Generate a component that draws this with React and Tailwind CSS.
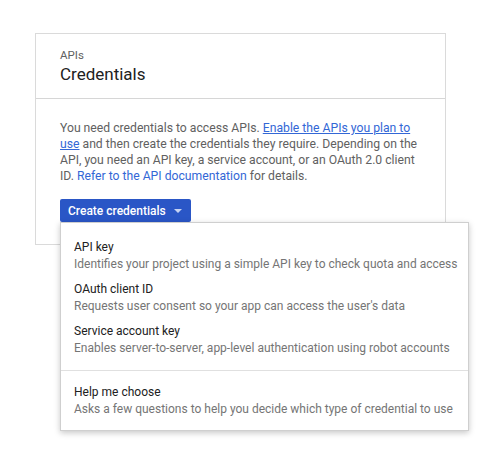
import React from "react";

const options = [
  {
    title: "API key",
    description: "Identifies your project using a simple API key to check quota and access",
  },
  {
    title: "OAuth client ID",
    description: "Requests user consent so your app can access the user's data",
  },
  {
    title: "Service account key",
    description: "Enables server-to-server, app-level authentication using robot accounts",
  },
];

function MenuItem({ title, description }) {
  return (
    <div className="flex flex-col whitespace-nowrap">
      <span className="text-[12px] leading-[17px] text-[#212121]">{title}</span>
      <span className="text-[12px] leading-[17px] text-[#757575]">{description}</span>
    </div>
  );
}

export default function App() {
  return (
    <div className="min-h-[458px] bg-white pt-[33px] pl-[35px] font-['Roboto',sans-serif]">
      <div className="w-[411px] border border-[#dadada] bg-white">
        {/* header */}
        <div className="px-6 pt-[14px] pb-3 border-b border-[#d6d6d6]">
          <div className="text-[11.5px] leading-[14px] text-[#616161]">APIs</div>
          <div className="text-[17px] leading-[24px] text-[#212121]">Credentials</div>
        </div>

        {/* body */}
        <div className="px-6 pt-[21px] pb-[22px]">
          <p className="text-[12.2px] leading-[16px] text-[#616161]">
            You need credentials to access APIs.{" "}
            <a className="text-[#3367d6] underline">Enable the APIs you plan to use</a> and
            then create the credentials they require. Depending on the API, you need an API
            key, a service account, or an OAuth 2.0 client ID.{" "}
            <a className="text-[#3367d6]">Refer to the API documentation</a> for details.
          </p>

          <div className="relative mt-[15px]">
            <button className="flex h-[23px] w-[131px] items-center justify-between whitespace-nowrap rounded-[2px] bg-[#2a56c6] pl-2 pr-[9px] text-[12px] font-medium text-white">
              Create credentials
              <svg width="8" height="4" viewBox="0 0 8 4">
                <path d="M0 0h8L4 4z" fill="#c7d3f2" />
              </svg>
            </button>

            {/* dropdown */}
            <div className="absolute left-0 top-[23px] z-10 w-[409px] border border-[#cfcfcf] bg-white shadow-[0_2px_6px_rgba(0,0,0,0.22)]">
              <div className="flex flex-col gap-2 px-[13px] pt-4 pb-[13px]">
                {options.map((o) => (
                  <MenuItem key={o.title} {...o} />
                ))}
              </div>
              <div className="border-t border-[#e0e0e0] px-[13px] pt-[13px] pb-3">
                <MenuItem
                  title="Help me choose"
                  description="Asks a few questions to help you decide which type of credential to use"
                />
              </div>
            </div>
          </div>
        </div>
      </div>
    </div>
  );
}
